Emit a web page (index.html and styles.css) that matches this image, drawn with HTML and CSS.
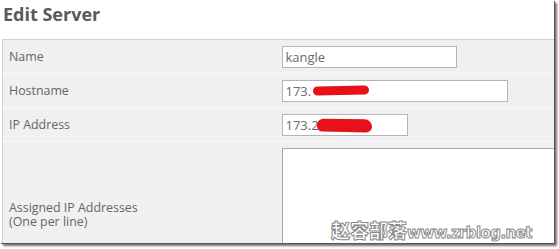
FILE: index.html
```html
<!DOCTYPE html>
<html>
<head>
<meta charset="utf-8">
<link rel="stylesheet" href="styles.css">
</head>
<body>
<div class="shot">
  <h2 class="title">Edit Server</h2>
  <table class="form">
    <colgroup>
      <col class="c1">
      <col class="c2">
    </colgroup>
    <tr class="row">
      <td class="label">Name</td>
      <td class="field"><div class="box w175">kangle</div></td>
    </tr>
    <tr class="row">
      <td class="label">Hostname</td>
      <td class="field"><div class="box w226">173.<span class="scribble s1"></span></div></td>
    </tr>
    <tr class="row">
      <td class="label">IP Address</td>
      <td class="field"><div class="box w126">173.2<span class="scribble s2"></span></div></td>
    </tr>
    <tr class="row tall">
      <td class="label">Assigned IP Addresses<br>(One per line)</td>
      <td class="field top"><div class="area"></div></td>
    </tr>
  </table>
  <div class="mark">赵容部落<span class="latin">www.zrblog.net</span></div>
</div>
</body>
</html>
```
FILE: styles.css
```css
html, body {
  margin: 0;
  padding: 0;
  background: #fff;
}
body {
  width: 559px;
  height: 249px;
  overflow: hidden;
}
.shot {
  position: relative;
  width: 554px;
  height: 243px;
  overflow: hidden;
  background: #fff;
  box-shadow: 1px 1px 0 #555, 3px 3px 2px rgba(0,0,0,0.55);
  font-family: "Open Sans", "DejaVu Sans", sans-serif;
}
.title {
  margin: 0;
  padding: 2px 0 0 3px;
  height: 39px;
  box-sizing: border-box;
  font-size: 18px;
  font-weight: 700;
  color: #5a5a5a;
  line-height: 24px;
}
.form {
  margin-left: 2px;
  width: 620px;
  table-layout: fixed;
  border-collapse: collapse;
  border: 1px solid #cfcfcf;
  background: #f0f0f0;
}
.c1 { width: 276px; }
.c2 { width: 344px; }
.row td {
  height: 33px;
  padding: 0;
  border-bottom: 1px solid #f7f7f7;
  vertical-align: middle;
}
.row.tall td {
  height: 140px;
}
.label {
  padding-left: 6px !important;
  font-size: 12.4px;
  color: #666;
  line-height: 14px;
}
.tall .label {
  padding-top: 0;
}
.field {
  padding-left: 3px !important;
}
.field.top {
  vertical-align: top !important;
  padding-top: 6px !important;
}
.box {
  position: relative;
  height: 22px;
  box-sizing: border-box;
  border: 1px solid #b4b4b4;
  background: #fff;
  font-size: 13px;
  color: #6a6a6a;
  line-height: 20px;
  padding-left: 3px;
}
.w175 { width: 175px; }
.w226 { width: 226px; }
.w126 { width: 126px; }
.area {
  width: 400px;
  height: 140px;
  box-sizing: border-box;
  border: 1px solid #a8a8a8;
  background: #fff;
}
.scribble {
  position: absolute;
  background: #e8101a;
  border-radius: 6px;
}
.s1 {
  left: 30px;
  top: 5px;
  width: 56px;
  height: 9px;
  transform: rotate(-1deg);
}
.s2 {
  left: 34px;
  top: 4px;
  width: 55px;
  height: 13px;
  border-radius: 7px 8px 6px 6px;
  transform: rotate(1deg);
}
.mark {
  position: absolute;
  left: 331px;
  top: 219px;
  font-family: "Noto Sans CJK SC", "DejaVu Sans", sans-serif;
  font-weight: 900;
  font-size: 19px;
  line-height: 22px;
  color: #fff;
  -webkit-text-stroke: 1px #8a8a8a;
  white-space: nowrap;
}
.latin {
  font-family: "DejaVu Sans", sans-serif;
  font-weight: 700;
  font-size: 15px;
  letter-spacing: -0.6px;
}
```
